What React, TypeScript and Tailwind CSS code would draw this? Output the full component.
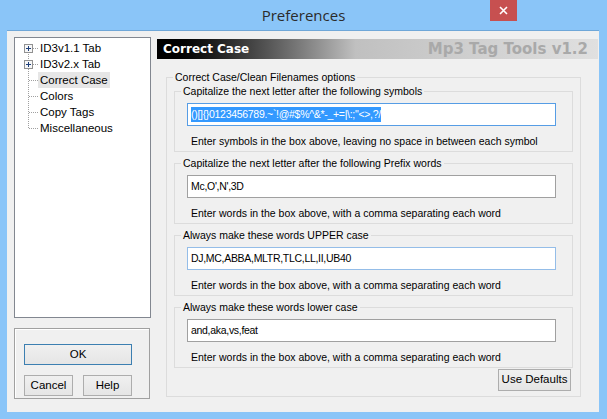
import React from "react";

const font = { fontFamily: '"Liberation Sans", Arial, sans-serif' };

function TreeLines() {
  const dots = "#a0a0a0";
  return (
    <svg width="23" height="96" className="shrink-0">
      {/* vertical connector */}
      <line x1="13.5" y1="12" x2="13.5" y2="20" stroke={dots} strokeDasharray="1 1" />
      <line x1="13.5" y1="29" x2="13.5" y2="88" stroke={dots} strokeDasharray="1 1" />
      {/* horizontal connectors */}
      <line x1="18" y1="8.5" x2="23" y2="8.5" stroke={dots} strokeDasharray="1 1" />
      <line x1="18" y1="24.5" x2="23" y2="24.5" stroke={dots} strokeDasharray="1 1" />
      {[40, 56, 72, 88].map((y) => (
        <line key={y} x1="14" y1={y + 0.5} x2="23" y2={y + 0.5} stroke={dots} strokeDasharray="1 1" />
      ))}
      {/* plus boxes */}
      {[4, 20].map((y) => (
        <g key={y}>
          <rect x="9.5" y={y + 0.5} width="8" height="8" fill="#f7f7f7" stroke="#919191" />
          <line x1="11" y1={y + 4.5} x2="16" y2={y + 4.5} stroke="#1e3f7a" />
          <line x1="13.5" y1={y + 2} x2="13.5" y2={y + 7} stroke="#1e3f7a" />
        </g>
      ))}
    </svg>
  );
}

function Tree() {
  const items = ["ID3v1.1 Tab", "ID3v2.x Tab", "Correct Case", "Colors", "Copy Tags", "Miscellaneous"];
  return (
    <div className="h-[281px] bg-white border border-[#828790] pt-[2px]">
      <div className="flex">
        <TreeLines />
        <div className="flex flex-col">
          {items.map((it) => (
            <div key={it} className="h-4 flex items-center">
              <span
                className={
                  "px-[2px] h-4 leading-4 text-[11.5px] text-black " +
                  (it === "Correct Case" ? "bg-[#e6e6e6]" : "")
                }
              >
                {it}
              </span>
            </div>
          ))}
        </div>
      </div>
    </div>
  );
}

function WinButton({ children, className = "" }: { children: React.ReactNode; className?: string }) {
  return (
    <button
      className={
        "h-[21px] bg-gradient-to-b from-[#f0f0f0] to-[#e5e5e5] border text-[11.5px] text-black leading-none " +
        className
      }
    >
      {children}
    </button>
  );
}

function Group({
  title,
  value,
  hint,
  inputClass,
  selected,
}: {
  title: string;
  value: string;
  hint: string;
  inputClass: string;
  selected?: boolean;
}) {
  return (
    <fieldset className="border border-[#dcdcdc]">
      <legend className="ml-[6px] px-[2px] text-[10.5px] leading-[13px] text-black">{title}</legend>
      <div className="pl-[12px] pb-[3px]">
        <div
          className={
            "mt-[5px] w-[369px] h-[23px] bg-white border flex items-center px-[3px] text-[10.5px] tracking-[-0.3px] " +
            inputClass
          }
        >
          {selected ? (
            <span className="bg-[#3399ff] text-white leading-[15px]">{value}</span>
          ) : (
            <span className="text-black">{value}</span>
          )}
        </div>
        <div className="mt-[9px] ml-[4px] text-[10.5px] leading-[13px] text-black">{hint}</div>
      </div>
    </fieldset>
  );
}

export default function App() {
  return (
    <div className="w-[607px] h-[419px] bg-[#8ac5f8] flex flex-col overflow-hidden" style={font}>
      {/* title bar */}
      <div className="h-[30px] shrink-0 flex items-start relative">
        <div
          className="flex-1 h-[30px] flex items-center justify-center text-[15px] text-[#2b2b2b]"
          style={{ fontFamily: '"Open Sans", "Noto Sans", sans-serif' }}
        >
          Preferences
        </div>
        <div className="absolute right-[90px] top-0 w-[27px] h-[21px] bg-[#c75050] flex items-center justify-center">
          <svg width="9" height="9" viewBox="0 0 9 9">
            <path d="M1 1 L8 8 M8 1 L1 8" stroke="white" strokeWidth="1.6" />
          </svg>
        </div>
      </div>

      {/* client area */}
      <div className="ml-[7px] w-[592px] h-[382px] bg-[#f0f0f0] border-t border-[#6fa7d8] flex pl-[7px] pt-[6px]">
        {/* left column */}
        <div className="w-[137px] shrink-0 flex flex-col">
          <Tree />
          <div className="mt-[10px] w-[136px] h-[71px] border border-[#a0a0a0] shadow-[inset_1px_1px_0_#fff] pl-[9px] pt-[12px]">
            <WinButton className="w-[108px] border-[#3c7fb1]">OK</WinButton>
            <div className="flex gap-[10px] mt-[10px]">
              <WinButton className="w-[49px] border-[#adadad]">Cancel</WinButton>
              <WinButton className="w-[49px] border-[#adadad]">Help</WinButton>
            </div>
          </div>
        </div>

        {/* right column */}
        <div className="ml-[6px] mt-[2px] w-[441px] flex flex-col">
          <div className="h-5 bg-gradient-to-r from-black via-[#c0c0c0] via-45% to-[#e0e0e0] flex items-center justify-between pl-[6px] pr-[10px]">
            <span className="text-white font-bold text-[12px]" style={{ fontFamily: '"DejaVu Sans", Verdana, sans-serif' }}>
              Correct Case
            </span>
            <span className="text-[#a9a9a9] font-bold text-[15px]" style={{ fontFamily: '"DejaVu Sans", Verdana, sans-serif' }}>
              Mp3 Tag Tools v1.2
            </span>
          </div>

          <fieldset className="ml-[9px] mt-[12px] w-[415px] border border-[#dcdcdc]">
            <legend className="ml-[6px] px-[2px] text-[10.5px] leading-[13px] text-black">
              Correct Case/Clean Filenames options
            </legend>
            <div className="px-[7px] pb-[5px]">
              <div className="flex flex-col gap-[5px] mt-[1px]">
                <Group
                  title="Capitalize the next letter after the following symbols"
                  value={"()[]{}0123456789.~`!@#$%^&*-_+=|\\:;\"<>,?/"}
                  hint="Enter symbols in the box above, leaving no space in between each symbol"
                  inputClass="border-[#569de5]"
                  selected
                />
                <Group
                  title="Capitalize the next letter after the following Prefix words"
                  value="Mc,O',N',3D"
                  hint="Enter words in the box above, with a comma separating each word"
                  inputClass="border-[#a0a0a0]"
                />
                <Group
                  title="Always make these words UPPER case"
                  value="DJ,MC,ABBA,MLTR,TLC,LL,II,UB40"
                  hint="Enter words in the box above, with a comma separating each word"
                  inputClass="border-[#94bde8]"
                />
                <Group
                  title="Always make these words lower case"
                  value="and,aka,vs,feat"
                  hint="Enter words in the box above, with a comma separating each word"
                  inputClass="border-[#a0a0a0]"
                />
              </div>
              <div className="flex justify-end mt-[1px] pr-[2px]">
                <WinButton className="w-[73px] h-[22px] border-[#adadad]">Use Defaults</WinButton>
              </div>
            </div>
          </fieldset>
        </div>
      </div>
    </div>
  );
}
